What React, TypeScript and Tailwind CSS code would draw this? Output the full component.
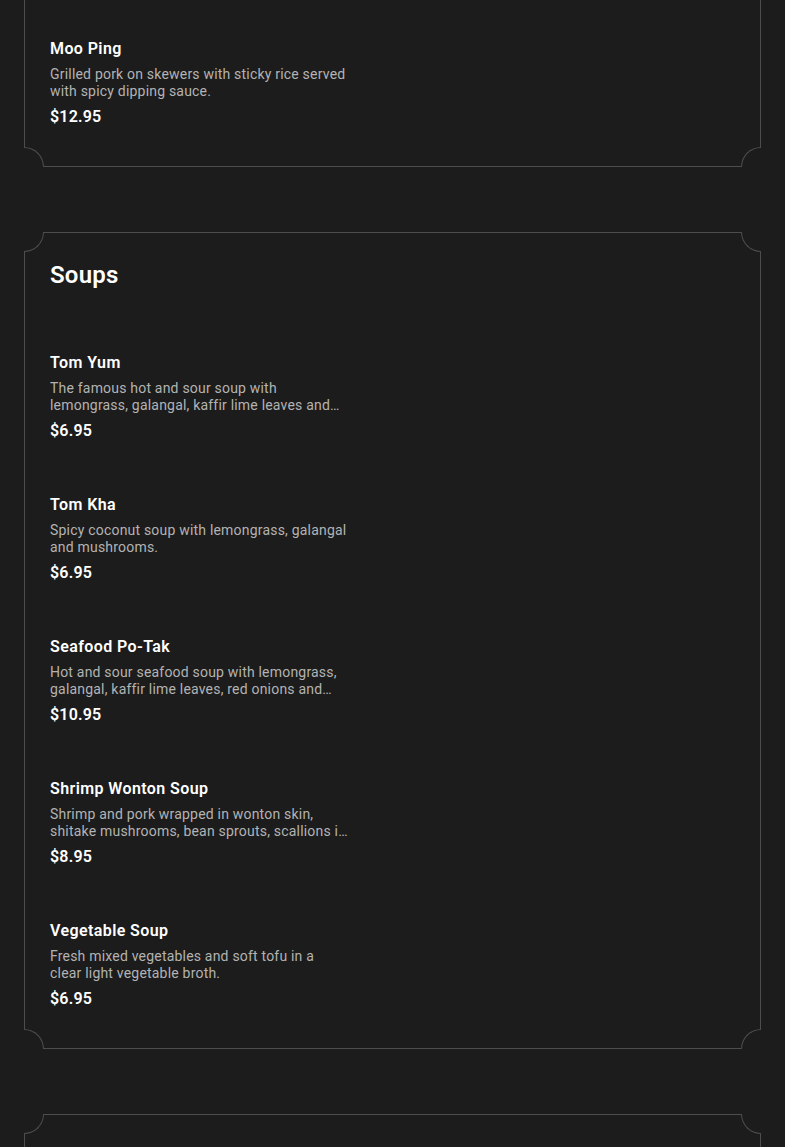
const SOUPS = [
	{
		name: "Tom Yum",
		desc: "The famous hot and sour soup with lemongrass, galangal, kaffir lime leaves and mushrooms.",
		price: "$6.95",
	},
	{ name: "Tom Kha", desc: "Spicy coconut soup with lemongrass, galangal and mushrooms.", price: "$6.95" },
	{
		name: "Seafood Po-Tak",
		desc: "Hot and sour seafood soup with lemongrass, galangal, kaffir lime leaves, red onions and basil.",
		price: "$10.95",
	},
	{
		name: "Shrimp Wonton Soup",
		desc: "Shrimp and pork wrapped in wonton skin, shitake mushrooms, bean sprouts, scallions in clear broth.",
		price: "$8.95",
	},
	{
		name: "Vegetable Soup",
		desc: "Fresh mixed vegetables and soft tofu in a clear light vegetable broth.",
		price: "$6.95",
	},
];

type Item = { name: string; desc: string; price: string };

function Corners({ top = true }: { top?: boolean }) {
	const base = "absolute w-[20px] h-[20px] bg-[#1c1c1c] border-[#4d4d4d]";
	return (
		<>
			{top && (
				<>
					<span className={`${base} -top-px -left-px border-r border-b rounded-br-[20px]`} />
					<span className={`${base} -top-px -right-px border-l border-b rounded-bl-[20px]`} />
				</>
			)}
			<span className={`${base} -bottom-px -left-px border-r border-t rounded-tr-[20px]`} />
			<span className={`${base} -bottom-px -right-px border-l border-t rounded-tl-[20px]`} />
		</>
	);
}

function MenuItem({ item }: { item: Item }) {
	return (
		<div className="py-[13px]">
			<h3 className="text-white text-base leading-6 font-semibold tracking-[0.4px]">{item.name}</h3>
			<p className="mt-[5px] max-w-[298px] text-[14px] leading-[17px] tracking-[0.2px] text-[#b3b3b3] line-clamp-2">
				{item.desc}
			</p>
			<p className="mt-[5px] text-white text-base leading-6 font-semibold tracking-[0.2px]">{item.price}</p>
		</div>
	);
}

export default function App() {
	return (
		<div
			className="min-h-screen bg-[#1c1c1c] px-6 flex flex-col gap-[65px] overflow-hidden h-[1147px]"
			style={{ fontFamily: "Roboto, 'Liberation Sans', sans-serif" }}
		>
			<section className="relative border border-t-0 border-[#4d4d4d] pl-[25px] pr-6 pt-[24px] pb-6 shrink-0">
				<MenuItem
					item={{
						name: "Moo Ping",
						desc: "Grilled pork on skewers with sticky rice served with spicy dipping sauce.",
						price: "$12.95",
					}}
				/>
				<Corners top={false} />
			</section>

			<section className="relative border border-[#4d4d4d] pl-[25px] pr-6 pt-[26px] pb-6 shrink-0">
				<h2 className="text-white text-2xl leading-8 font-semibold tracking-[0.2px]">Soups</h2>
				<div className="mt-[47px] flex flex-col gap-6">
					{SOUPS.map((item) => (
						<MenuItem key={item.name} item={item} />
					))}
				</div>
				<Corners />
			</section>

			<section className="relative border border-[#4d4d4d] pl-[25px] pr-6 pt-[26px] pb-6 shrink-0">
				<h2 className="text-white text-2xl leading-8 font-semibold tracking-[0.2px]">Curries</h2>
				<div className="mt-[47px] h-[400px]" />
				<Corners />
			</section>
		</div>
	);
}
